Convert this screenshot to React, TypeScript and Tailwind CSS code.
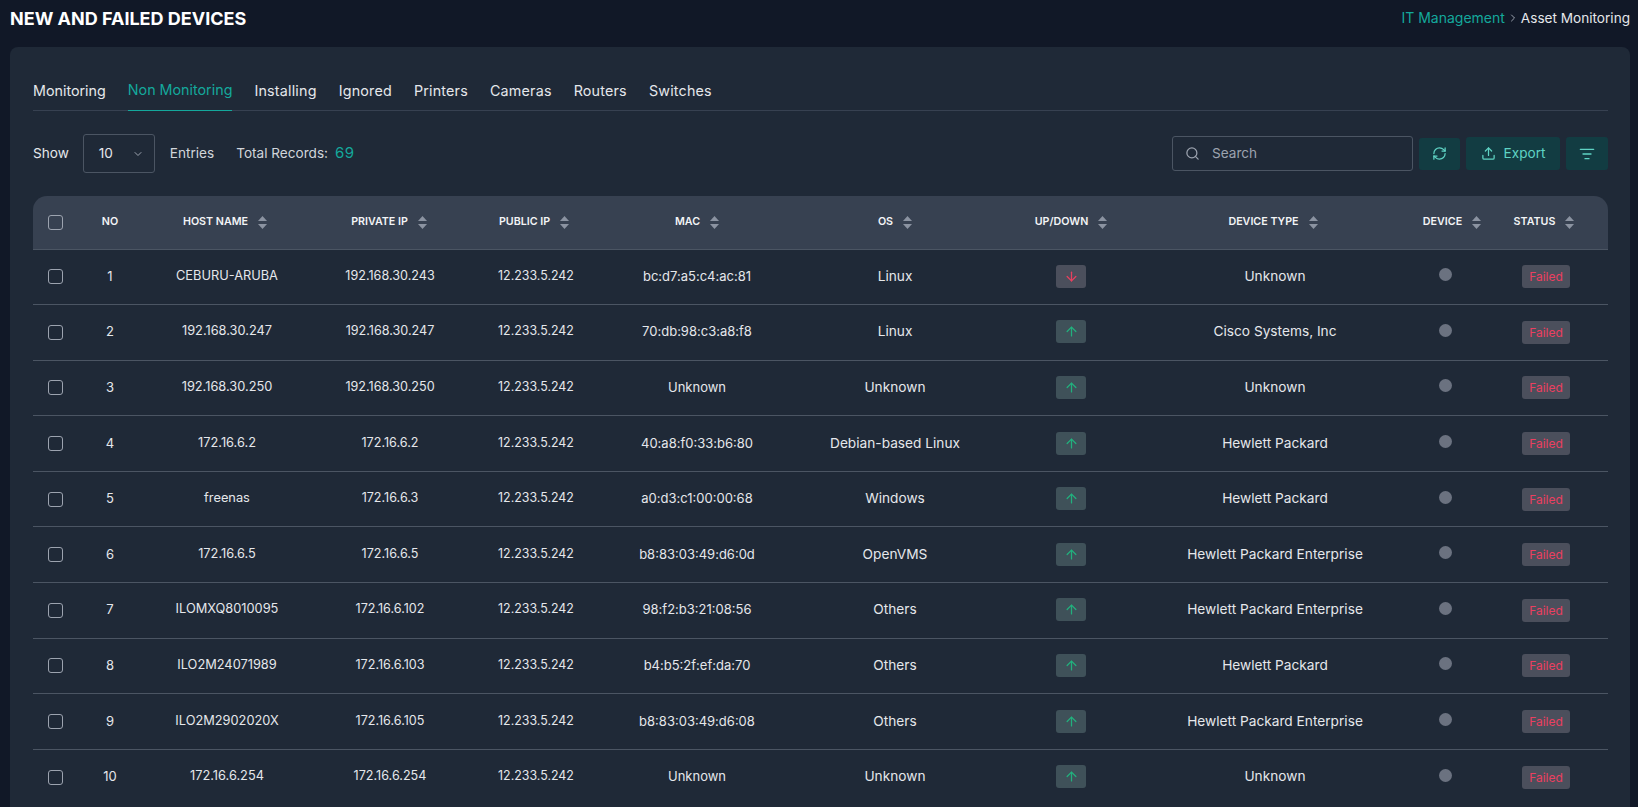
import { ArrowDown, ArrowUp, ChevronDown, ChevronRight, ListFilter, RefreshCw, Search, Upload } from "lucide-react";

const tabs = ["Monitoring", "Non Monitoring", "Installing", "Ignored", "Printers", "Cameras", "Routers", "Switches"];

const rows = [
  ["1", "CEBURU-ARUBA", "192.168.30.243", "bc:d7:a5:c4:ac:81", "Linux", "down", "Unknown"],
  ["2", "192.168.30.247", "192.168.30.247", "70:db:98:c3:a8:f8", "Linux", "up", "Cisco Systems, Inc"],
  ["3", "192.168.30.250", "192.168.30.250", "Unknown", "Unknown", "up", "Unknown"],
  ["4", "172.16.6.2", "172.16.6.2", "40:a8:f0:33:b6:80", "Debian-based Linux", "up", "Hewlett Packard"],
  ["5", "freenas", "172.16.6.3", "a0:d3:c1:00:00:68", "Windows", "up", "Hewlett Packard"],
  ["6", "172.16.6.5", "172.16.6.5", "b8:83:03:49:d6:0d", "OpenVMS", "up", "Hewlett Packard Enterprise"],
  ["7", "ILOMXQ8010095", "172.16.6.102", "98:f2:b3:21:08:56", "Others", "up", "Hewlett Packard Enterprise"],
  ["8", "ILO2M24071989", "172.16.6.103", "b4:b5:2f:ef:da:70", "Others", "up", "Hewlett Packard"],
  ["9", "ILO2M2902020X", "172.16.6.105", "b8:83:03:49:d6:08", "Others", "up", "Hewlett Packard Enterprise"],
  ["10", "172.16.6.254", "172.16.6.254", "Unknown", "Unknown", "up", "Unknown"],
];

function SortIcon() {
  return (
    <svg width="9" height="13" viewBox="0 0 9 13" className="shrink-0 fill-[#8b93a1]">
      <path d="M4.5 0 9 5H0z" />
      <path d="M4.5 13 0 8h9z" />
    </svg>
  );
}

function Checkbox() {
  return <div className="mx-auto h-[15px] w-[15px] rounded-[3px] border border-[#9ca3af]" />;
}

function Head({ label, cls, sort = true }: { label: string; cls: string; sort?: boolean }) {
  return (
    <th className="p-0 font-semibold">
      <div className={`flex items-center justify-center gap-[10px] whitespace-nowrap ${cls}`}>
        <span>{label}</span>
        {sort && <SortIcon />}
      </div>
    </th>
  );
}

export default function App() {
  return (
    <div className="h-[807px] overflow-hidden bg-[#111827] font-['Inter',sans-serif] text-[13.6px] text-[#e5e7eb]">
      <div className="flex h-[47px] items-start justify-between pl-[10px] pr-[8px] pt-[6px]">
        <h1 className="text-[18px] leading-[26px] font-bold text-white">NEW AND FAILED DEVICES</h1>
        <div className="flex items-center pt-[2px] leading-[20px]">
          <span className="text-[14px] text-[#14a89c]">IT Management</span>
          <ChevronRight className="mx-[2px] h-3 w-3 text-[#9ca3af]" />
          <span>Asset Monitoring</span>
        </div>
      </div>

      <div className="ml-[10px] h-[760px] w-[1620px] rounded-t-[8px] bg-[#1f2937] pl-[23px] pr-[22px] pt-[32px]">
        <div className="flex h-[32px] gap-[22px] border-b border-[#374151] text-[14.3px]">
          {tabs.map((tab, i) => (
            <div
              key={tab}
              className={
                tab === "Non Monitoring"
                  ? "h-[32px] border-b border-[#14a89c] text-[#14a89c]"
                  : i === 0
                    ? "h-[31px] pt-[1px]"
                    : "h-[31px] pt-[1px] tracking-[0.2px]"
              }
            >
              {tab}
            </div>
          ))}
        </div>

        <div className="mt-[23px] flex h-[39px] items-center">
          <span>Show</span>
          <div className="ml-[14px] flex h-[39px] w-[72px] items-center justify-between rounded-[3px] border border-[#4b5563] pl-[15px] pr-[10px]">
            <span>10</span>
            <ChevronDown className="h-3 w-3 text-[#9ca3af]" />
          </div>
          <span className="ml-[15px] text-[#d1d5db]">Entries</span>
          <span className="ml-[22px] text-[#d1d5db]">Total Records:</span>
          <span className="ml-[7px] text-[15px] tracking-wide text-[#14a89c]">69</span>

          <div className="ml-auto flex h-[35px] w-[241px] items-center rounded-[3px] border border-[#4b5563] pl-[12px] text-[#9ca3af]">
            <Search className="h-[15px] w-[15px]" />
            <span className="ml-[12px]">Search</span>
          </div>
          <button className="ml-[6px] flex h-[32px] w-[41px] items-center justify-center rounded-[3px] bg-[#123c42] text-[#5fd3c4]">
            <RefreshCw className="h-[15px] w-[15px]" />
          </button>
          <button className="ml-[6px] flex h-[33px] w-[94px] items-center justify-center gap-[8px] rounded-[3px] bg-[#123c42] text-[#5fd3c4]">
            <Upload className="h-[15px] w-[15px]" />
            Export
          </button>
          <button className="ml-[6px] flex h-[33px] w-[42px] items-center justify-center rounded-[3px] bg-[#123c42] text-[#5fd3c4]">
            <ListFilter className="h-[16px] w-[16px]" />
          </button>
        </div>

        <table className="mt-[23px] w-[1575px] table-fixed border-collapse text-center">
          <colgroup>
            <col className="w-[45px]" />
            <col className="w-[64px]" />
            <col className="w-[170px]" />
            <col className="w-[156px]" />
            <col className="w-[136px]" />
            <col className="w-[186px]" />
            <col className="w-[210px]" />
            <col className="w-[142px]" />
            <col className="w-[266px]" />
            <col className="w-[74px]" />
            <col className="w-[126px]" />
          </colgroup>
          <thead>
            <tr className="h-[53px] border-b border-[#4b5563] bg-[#374151] text-[10.7px] text-[#f3f4f6]">
              <th className="rounded-tl-[14px] p-0"><Checkbox /></th>
              <Head label="NO" cls="" sort={false} />
              <Head label="HOST NAME" cls="pr-[4px]" />
              <Head label="PRIVATE IP" cls="pr-[2px]" />
              <Head label="PUBLIC IP" cls="pr-[4px]" />
              <Head label="MAC" cls="" />
              <Head label="OS" cls="" />
              <Head label="UP/DOWN" cls="" />
              <Head label="DEVICE TYPE" cls="pr-[4px]" />
              <Head label="DEVICE" cls="pl-[14px]" />
              <th className="rounded-tr-[14px] p-0 font-semibold">
                <div className="flex items-center justify-center gap-[10px] pr-[2px]">
                  <span>STATUS</span>
                  <SortIcon />
                </div>
              </th>
            </tr>
          </thead>
          <tbody className="leading-5">
            {rows.map((row) => (
              <tr key={row[0]} className="h-[55.6px] border-b border-[#4b5563] last:border-b-0">
                <td className="p-0"><Checkbox /></td>
                <td className="p-0 pb-[2px] text-[13px]">{row[0]}</td>
                <td className="p-0 pb-[2px] text-[12.8px]">{row[1]}</td>
                <td className="p-0 pb-[2px] text-[12.6px]">{row[2]}</td>
                <td className="p-0 pb-[2px] text-[12.4px]">12.233.5.242</td>
                <td className="p-0 pb-[2px] text-[13px]">{row[3]}</td>
                <td className="p-0 pb-[2px] text-[13.7px]">{row[4]}</td>
                <td className="p-0">
                  {row[5] === "down" ? (
                    <div className="mx-auto mb-[1px] flex h-[23px] w-[30px] items-center justify-center rounded-[3px] bg-[#4b4f5c] text-[#e8405f]">
                      <ArrowDown className="h-[15px] w-[15px]" />
                    </div>
                  ) : (
                    <div className="mx-auto mb-[1px] flex h-[23px] w-[30px] items-center justify-center rounded-[3px] bg-[#3f5159] text-[#22b07d]">
                      <ArrowUp className="h-[15px] w-[15px]" />
                    </div>
                  )}
                </td>
                <td className="p-0 pb-[2px] text-[13.7px]">{row[6]}</td>
                <td className="p-0">
                  <div className="mx-auto mb-[4px] h-[13px] w-[13px] rounded-full bg-[#6b7280]" />
                </td>
                <td className="p-0">
                  <span className="ml-[2px] inline-block h-[23px] w-[48px] rounded-[3px] bg-[#4b4f5c] text-[12px] leading-[23px] text-[#ec3f60]">Failed</span>
                </td>
              </tr>
            ))}
          </tbody>
        </table>
      </div>
    </div>
  );
}
